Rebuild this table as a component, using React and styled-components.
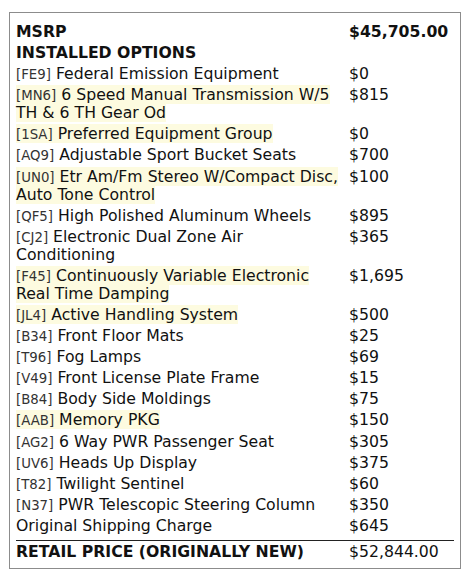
import styled, { createGlobalStyle } from "styled-components";

const GlobalStyle = createGlobalStyle`
    body {
        margin: 0;
        background: #fff;
        font-family: "DejaVu Sans", "Liberation Sans", sans-serif;
        color: #111;
    }
`

const Sticker = styled.div`
    box-sizing: border-box;
    margin: 12px 0 0 9px;
    width: 452px;
    height: 557px;
    border: 1px solid #8c8c8c;
    padding: 10px 6px 0 6px;
`

const Grid = styled.div`
    display: grid;
    grid-template-columns: 326px 1fr;
    column-gap: 7px;
    row-gap: 3.1px;
    font-size: 15.7px;
    line-height: 18px;
`

const Head = styled.div`
    font-weight: bold;
    font-size: 15.7px;
`

const Item = styled.div``

const Text = styled.span`
    background: ${p => (p.$mark ? "#fdfbe0" : "transparent")};
    box-decoration-break: clone;
    -webkit-box-decoration-break: clone;
`

const Code = styled.span`
    font-size: 13.3px;
    line-height: 1;
    color: #333;
`

const Price = styled.div`
    font-weight: ${p => (p.$bold ? "bold" : "normal")};
`

const Total = styled.div`
    display: grid;
    grid-template-columns: 326px 1fr;
    column-gap: 7px;
    margin-top: 5px;
    border-top: 1px solid #222;
    padding-top: 2px;
    font-size: 15.7px;
    line-height: 18px;
`

const options = [
    { code: "FE9", name: "Federal Emission Equipment", price: "$0" },
    { code: "MN6", name: "6 Speed Manual Transmission W/5 TH & 6 TH Gear Od", price: "$815", mark: true },
    { code: "1SA", name: "Preferred Equipment Group", price: "$0", mark: true },
    { code: "AQ9", name: "Adjustable Sport Bucket Seats", price: "$700" },
    { code: "UN0", name: "Etr Am/Fm Stereo W/Compact Disc, Auto Tone Control", price: "$100", mark: true },
    { code: "QF5", name: "High Polished Aluminum Wheels", price: "$895" },
    { code: "CJ2", name: "Electronic Dual Zone Air Conditioning", price: "$365" },
    { code: "F45", name: "Continuously Variable Electronic Real Time Damping", price: "$1,695", mark: true },
    { code: "JL4", name: "Active Handling System", price: "$500", mark: true },
    { code: "B34", name: "Front Floor Mats", price: "$25" },
    { code: "T96", name: "Fog Lamps", price: "$69" },
    { code: "V49", name: "Front License Plate Frame", price: "$15" },
    { code: "B84", name: "Body Side Moldings", price: "$75" },
    { code: "AAB", name: "Memory PKG", price: "$150", mark: true },
    { code: "AG2", name: "6 Way PWR Passenger Seat", price: "$305" },
    { code: "UV6", name: "Heads Up Display", price: "$375" },
    { code: "T82", name: "Twilight Sentinel", price: "$60" },
    { code: "N37", name: "PWR Telescopic Steering Column", price: "$350" },
]

const App = () => (
    <>
        <GlobalStyle />
        <Sticker>
            <Grid>
                <Head>MSRP</Head>
                <Price $bold>$45,705.00</Price>
                <Head>INSTALLED OPTIONS</Head>
                <div />
                {options.map(o => [
                    <Item key={o.code}>
                        <Text $mark={o.mark}><Code>[{o.code}]</Code> {o.name} </Text>
                    </Item>,
                    <Price key={o.code + "p"}>{o.price}</Price>,
                ])}
                <Item>Original Shipping Charge</Item>
                <Price>$645</Price>
            </Grid>
            <Total>
                <Head>RETAIL PRICE (ORIGINALLY NEW)</Head>
                <Price>$52,844.00</Price>
            </Total>
        </Sticker>
    </>
)

export default App;
